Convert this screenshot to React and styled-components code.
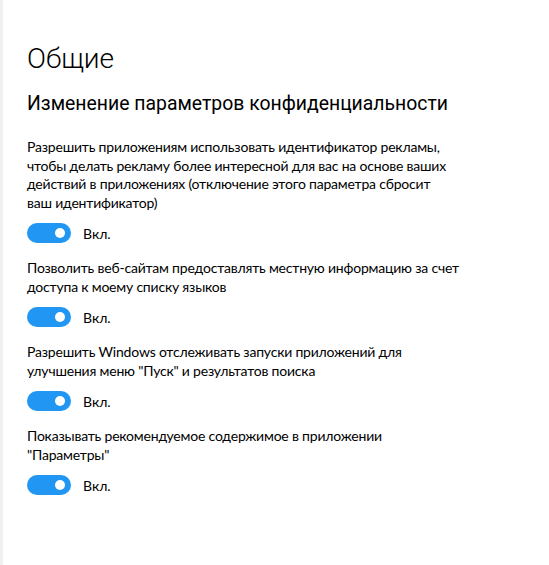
import React from 'react';
import styled, { createGlobalStyle } from "styled-components"

const GlobalStyle = createGlobalStyle`
	html, body {
		margin: 0;
		padding: 0;
		background: #ffffff;
	}
	body {
		font-family: Roboto, "Noto Sans", sans-serif;
		color: #000000;
	}
`;

const Page = styled.div`
	display: flex;
	min-height: 565px;
`;

const Strip = styled.div`
	width: 3px;
	background: #f0f0f0;
	flex-shrink: 0;
`;

const Content = styled.div`
	padding: 40px 0 0 24px;
	flex: 1;
`;

const Title = styled.h1`
	margin: 0;
	font-size: 28px;
	font-weight: 300;
	line-height: 38px;
`;

const Subtitle = styled.h2`
	margin: 13px 0 0;
	font-size: 19.4px;
	font-weight: 400;
	line-height: 26px;
`;

const Setting = styled.div`
	margin-top: ${(p) => (p.$first ? "21px" : "16px")};
`;

const Label = styled.p`
	margin: 0;
	font-family: Lato, Roboto, sans-serif;
	font-size: 14px;
	letter-spacing: -0.2px;
	line-height: 18.5px;
`;

const ToggleRow = styled.div`
	display: flex;
	align-items: center;
	gap: 12px;
	margin-top: 11px;
	height: 20px;
`;

const Switch = styled.div`
	width: 44px;
	height: 20px;
	border-radius: 10px;
	background: ${(p) => (p.$on ? "#2196f3" : "#ffffff")};
	display: flex;
	align-items: center;
	justify-content: ${(p) => (p.$on ? "flex-end" : "flex-start")};
	padding: 0 6px;
	box-sizing: border-box;
`;

const Knob = styled.span`
	width: 10px;
	height: 10px;
	border-radius: 50%;
	background: #ffffff;
`;

const State = styled.span`
	font-family: Lato, Roboto, sans-serif;
	font-size: 14px;
`;

const settings = [
	[
		"Разрешить приложениям использовать идентификатор рекламы,",
		"чтобы делать рекламу более интересной для вас на основе ваших",
		"действий в приложениях (отключение этого параметра сбросит",
		"ваш идентификатор)",
	],
	[
		"Позволить веб-сайтам предоставлять местную информацию за счет",
		"доступа к моему списку языков",
	],
	[
		"Разрешить Windows отслеживать запуски приложений для",
		"улучшения меню \"Пуск\" и результатов поиска",
	],
	[
		"Показывать рекомендуемое содержимое в приложении",
		"\"Параметры\"",
	],
]

export default function App() {
	return (
		<>
			<GlobalStyle />
			<Page>
				<Strip />
				<Content>
					<Title>Общие</Title>
					<Subtitle>Изменение параметров конфиденциальности</Subtitle>
					{settings.map((lines, i) => (
						<Setting key={i} $first={i === 0}>
							<Label>
								{lines.map((line, j) => (
									<React.Fragment key={j}>
										{line}
										{j < lines.length - 1 && <br />}
									</React.Fragment>
								))}
							</Label>
							<ToggleRow>
								<Switch $on>
									<Knob />
								</Switch>
								<State>Вкл.</State>
							</ToggleRow>
						</Setting>
					))}
				</Content>
			</Page>
		</>
	);
}
